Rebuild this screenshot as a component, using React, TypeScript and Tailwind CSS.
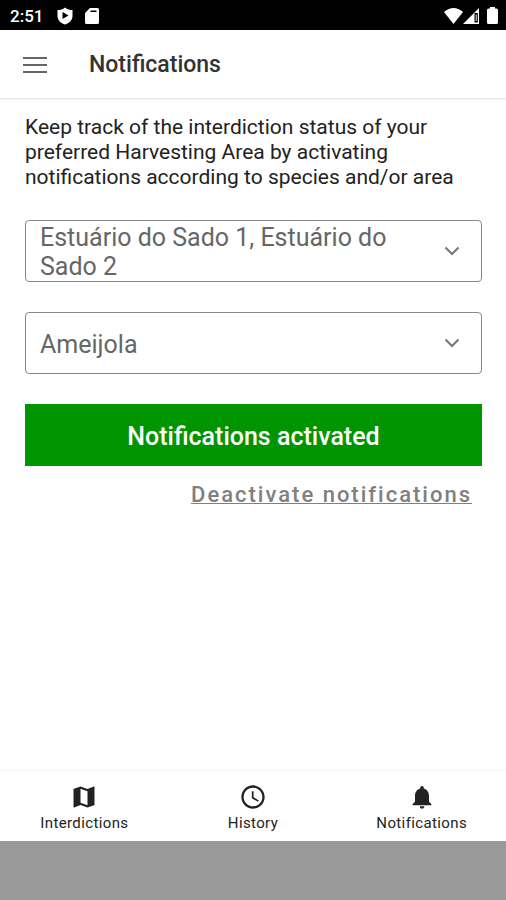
import React, { useState } from "react";
import { MdMap, MdNotifications, MdSchedule } from "react-icons/md";

const AREAS = [
  "Estuário do Sado 1, Estuário do Sado 2",
  "Estuário do Sado 1",
  "Estuário do Sado 2",
];

const TABS = [
  { label: "Interdictions", Icon: MdMap },
  { label: "History", Icon: MdSchedule },
  { label: "Notifications", Icon: MdNotifications },
];

function StatusBar() {
  return (
    <div className="flex h-[30px] items-center bg-black pt-px pr-1 pl-[10px] text-white">
      <span className="text-[17px] leading-5 font-medium">2:51</span>
      <svg viewBox="0 0 16 18" className="ml-[14px] h-[18px] w-4">
        <path
          fill="currentColor"
          fillRule="evenodd"
          d="M8 0.500 C10 2.500 13 3 15.500 3 V9 C15.500 13 12 16.500 8 17.500 C4 16.500 0.500 13 0.500 9 V3 C3 3 6 2.500 8 0.500 Z M5.500 5 V12 L11.500 8.500 Z"
        />
      </svg>
      <svg viewBox="0 0 14 16" className="ml-3 h-4 w-[14px]">
        <path
          fill="currentColor"
          fillRule="evenodd"
          d="M5 0 H12.500 Q14 0 14 1.500 V14.500 Q14 16 12.500 16 H1.500 Q0 16 0 14.500 V5 Z M5.500 2.500 V4 H11.500 V2.500 Z"
        />
      </svg>
      <div className="ml-auto flex items-center">
        <svg viewBox="0 0 19 16" className="h-4 w-[19px]">
          <path fill="currentColor" d="M0 4 Q9.500 -4 19 4 L9.500 16 Z" />
        </svg>
        <svg viewBox="0 0 16 16" className="h-4 w-4">
          <path
            fill="currentColor"
            fillRule="evenodd"
            d="M16 0 V16 H0 Z M11.500 5 V14.500 H14.800 V5 Z"
          />
          <path fill="currentColor" d="M12.700 6.500 H13.600 V13 H12.700 Z" />
        </svg>
        <svg viewBox="0 0 11 17" className="mr-1 ml-2 h-[17px] w-[11px]">
          <path
            fill="currentColor"
            d="M3 0 H8 V1.500 H9.500 Q11 1.500 11 3 V15.500 Q11 17 9.500 17 H1.500 Q0 17 0 15.500 V3 Q0 1.500 1.500 1.500 H3 Z"
          />
        </svg>
      </div>
    </div>
  );
}

function Header() {
  return (
    <header className="flex h-[69px] items-center border-b border-gray-200 px-[23px] pt-[2px] shadow-xs">
      <button type="button" aria-label="Open menu" className="text-[#666]">
        <svg viewBox="0 0 24 18" className="h-[18px] w-6">
          <path
            d="M0 2 H24 M0 9 H24 M0 16 H24"
            stroke="currentColor"
            strokeWidth="2"
          />
        </svg>
      </button>
      <h1 className="ml-[42px] text-[23px] leading-7 font-medium text-[#333]">
        Notifications
      </h1>
    </header>
  );
}

function Chevron() {
  return (
    <svg
      viewBox="0 0 16 10"
      className="pointer-events-none mr-[21px] h-[10px] w-4 flex-shrink-0"
    >
      <path
        d="M1.500 1.500 L8 8 L14.500 1.500"
        fill="none"
        stroke="#777"
        strokeWidth="2"
      />
    </svg>
  );
}

function AreaSelect() {
  const [area, setArea] = useState(AREAS[0]);
  // the native select can't wrap, so the value is drawn beneath it
  return (
    <div className="relative flex h-[62px] items-center rounded border border-[#888] text-[#666]">
      <span
        aria-hidden="true"
        className="flex-1 pt-[2px] pr-12 pl-[14px] text-[25px] leading-[29px]"
      >
        {area}
      </span>
      <Chevron />
      <select
        aria-label="Harvesting area"
        value={area}
        onChange={(e) => setArea(e.target.value)}
        className="absolute inset-0 h-full w-full cursor-pointer opacity-0"
      >
        {AREAS.map((a) => (
          <option key={a}>{a}</option>
        ))}
      </select>
    </div>
  );
}

function SpeciesSelect() {
  return (
    <div className="flex h-[62px] items-center rounded border border-[#888] text-[#666]">
      <select
        aria-label="Species"
        className="h-full min-w-0 flex-1 appearance-none bg-transparent pt-[2px] pl-[14px] text-[25px] leading-[29px] outline-none"
      >
        <option>Ameijola</option>
      </select>
      <Chevron />
    </div>
  );
}

function TabBar() {
  return (
    <nav className="flex h-[71px] border-t border-gray-100 text-[#222]">
      {TABS.map(({ label, Icon }) => (
        <a
          key={label}
          href="#"
          className="flex flex-1 flex-col items-center pt-3 text-[15px] leading-5 tracking-wide"
        >
          <Icon className="mb-[2px] h-7 w-7" />
          {label}
        </a>
      ))}
    </nav>
  );
}

export default function App() {
  return (
    <div className="flex min-h-screen flex-col bg-white font-['Roboto',sans-serif]">
      <StatusBar />
      <Header />
      <main className="flex flex-1 flex-col pt-4 pr-6 pl-[25px]">
        <p className="text-[21px] leading-[25px] text-[#222]">
          Keep track of the interdiction status of your preferred Harvesting
          Area by activating notifications according to species and/or area
        </p>
        <div className="mt-[30px] flex flex-col gap-[30px]">
          <AreaSelect />
          <SpeciesSelect />
          <button
            type="button"
            className="h-[62px] bg-[#009500] pt-[2px] text-[25px] leading-[29px] font-medium text-white"
          >
            Notifications activated
          </button>
        </div>
        <button
          type="button"
          className="mt-[15px] mr-[10px] self-end text-[22px] leading-7 font-medium tracking-[2px] text-[#808080] underline decoration-1"
        >
          Deactivate notifications
        </button>
      </main>
      <TabBar />
      <div className="h-[59px] bg-[#999]" />
    </div>
  );
}
